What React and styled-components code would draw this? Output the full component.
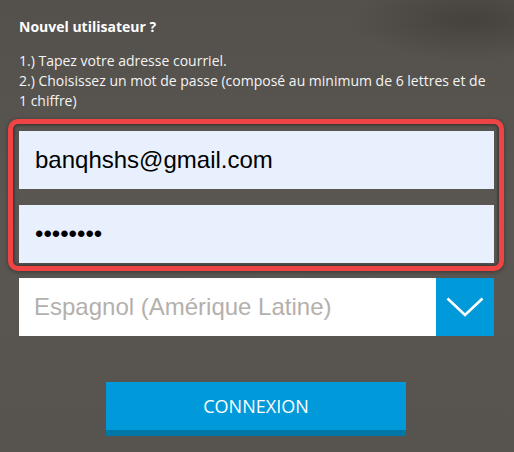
import React, { useState } from "react";
import styled, { createGlobalStyle } from "styled-components";

const GlobalStyle = createGlobalStyle`
  html, body {
    margin: 0;
    padding: 0;
    background: #56524d;
  }
  body {
    font-family: "Open Sans", "Liberation Sans", sans-serif;
  }
`;

const Page = styled.div`
  width: 514px;
  height: 452px;
  overflow: hidden;
  box-sizing: border-box;
  padding: 17px 0 0 0;
  background:
    radial-gradient(ellipse 120px 40px at 470px 20px, rgba(40, 36, 34, 0.35), transparent),
    radial-gradient(ellipse 220px 30px at 280px 300px, rgba(255, 255, 255, 0.03), transparent),
    linear-gradient(180deg, #54504b 0%, #5a5651 50%, #57534e 100%);
`;

const Heading = styled.h3`
  margin: 0 0 0 19px;
  font-size: 14px;
  line-height: 20px;
  font-weight: 700;
  color: #ffffff;
`;

const Instructions = styled.p`
  margin: 14px 0 0 19px;
  width: 472px;
  font-size: 14px;
  line-height: 20px;
  color: #f4f4f4;
`;

const Highlight = styled.div`
  margin: 8px 0 0 8px;
  width: 496px;
  box-sizing: border-box;
  border: 5px solid #f04344;
  border-radius: 10px;
  padding: 7px 4px 3px 6px;
  display: flex;
  flex-direction: column;
  gap: 16px;
  box-shadow: inset 0 0 3px 1px rgba(20, 18, 16, 0.55), 0 1px 4px rgba(0, 0, 0, 0.35);
`;

const Field = styled.input`
  display: block;
  width: 475px;
  height: 58px;
  box-sizing: border-box;
  border: none;
  outline: none;
  margin: 0;
  padding: 0 0 0 16px;
  background: #e8f0fe;
  color: #000000;
  font-family: "Liberation Sans", Arial, sans-serif;
  font-size: 24px;
`;

const SelectRow = styled.div`
  margin: 7px 0 0 19px;
  width: 475px;
  height: 58px;
  display: flex;
  background: #ffffff;
`;

const SelectLabel = styled.div`
  flex: 1;
  display: flex;
  align-items: center;
  padding-left: 15px;
  font-family: "Liberation Sans", Arial, sans-serif;
  font-size: 24px;
  color: #b4b0ac;
`;

const SelectToggle = styled.div`
  width: 58px;
  height: 58px;
  background: #0099d9;
  display: flex;
  align-items: center;
  justify-content: center;
`;

const Connect = styled.button`
  display: block;
  margin: 46px 0 0 106px;
  width: 300px;
  height: 54px;
  box-sizing: border-box;
  border: none;
  border-bottom: 6px solid #0077a6;
  background: #0099d9;
  color: #ffffff;
  font-family: "Open Sans", "Liberation Sans", sans-serif;
  font-size: 18px;
  padding: 0;
  cursor: pointer;
`;

function App() {
  const [email, setEmail] = useState("banqhshs@gmail.com");
  const [password, setPassword] = useState("12345678");

  return (
    <>
      <GlobalStyle />
      <Page>
        <Heading>Nouvel utilisateur ?</Heading>
        <Instructions>
          1.) Tapez votre adresse courriel.
          <br />
          2.) Choisissez un mot de passe (composé au minimum de 6 lettres et de 1 chiffre)
        </Instructions>
        <Highlight>
          <Field type="email" value={email} onChange={(e) => setEmail(e.target.value)} />
          <Field type="password" value={password} onChange={(e) => setPassword(e.target.value)} />
        </Highlight>
        <SelectRow>
          <SelectLabel>Espagnol (Amérique Latine)</SelectLabel>
          <SelectToggle>
            <svg width="38" height="20" viewBox="0 0 38 20" fill="none">
              <path d="M1.5 1.5 L19 18 L36.5 1.5" stroke="#ffffff" strokeWidth="2.6" />
            </svg>
          </SelectToggle>
        </SelectRow>
        <Connect>CONNEXION</Connect>
      </Page>
    </>
  );
}

export default App;
